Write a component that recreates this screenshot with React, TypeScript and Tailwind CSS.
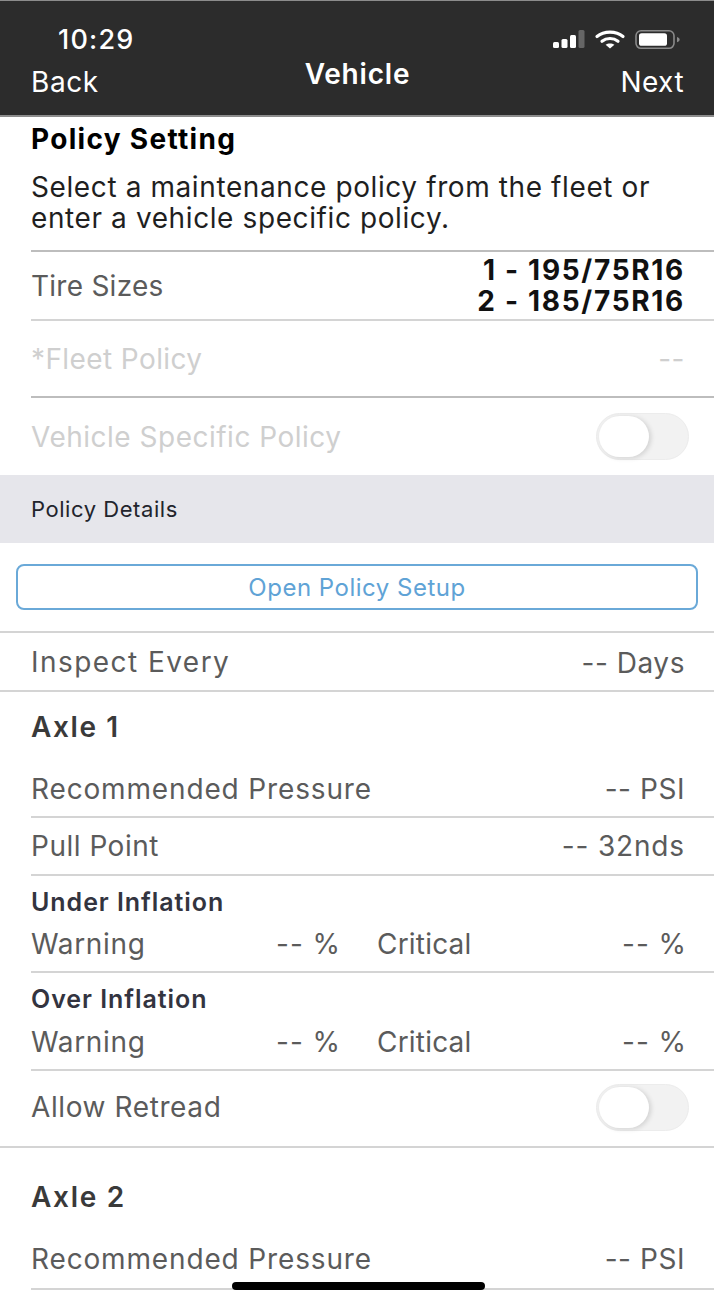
function Row({
  label,
  value,
  labelClass,
  valueClass,
  className = '',
}: {
  label: string
  value: string
  labelClass: string
  valueClass: string
  className?: string
}) {
  return (
    <div className={`flex items-center justify-between pr-[29px] pl-[31px] text-[28px] ${className}`}>
      <span className={labelClass}>{label}</span>
      <span className={valueClass}>{value}</span>
    </div>
  )
}

function Divider({ full = false, color = 'bg-[#d4d4d4]' }: { full?: boolean; color?: string }) {
  return <div className={`h-[2px] shrink-0 ${color} ${full ? '' : 'ml-[31px]'}`} />
}

function Toggle() {
  return (
    <div className="h-[47px] w-[93px] rounded-full border border-[#ececec] bg-[#f2f2f2] p-[2px]">
      <div className="h-[41px] w-[50px] rounded-full bg-white shadow-[2px_1px_5px_rgba(0,0,0,0.14)]" />
    </div>
  )
}

function Inflation({
  title,
  titleClass,
  gridClass,
  className,
}: {
  title: string
  titleClass: string
  gridClass: string
  className: string
}) {
  return (
    <div className={`flex flex-col pr-[29px] pl-[31px] ${className}`}>
      <div className={`mt-[11px] text-[25px] leading-[30px] font-semibold text-[#33343f] ${titleClass}`}>{title}</div>
      <div className={`grid grid-cols-[308px_1fr] gap-[38px] text-[28px] leading-[34px] text-[#5b5b5b] ${gridClass}`}>
        <div className="flex justify-between">
          <span className="tracking-[0.65px]">Warning</span>
          <span className="-mr-[2px] tracking-[0.95px]">-- %</span>
        </div>
        <div className="flex justify-between">
          <span className="tracking-[0.2px]">Critical</span>
          <span className="-mr-[2px] tracking-[0.95px]">-- %</span>
        </div>
      </div>
    </div>
  )
}

function StatusIcons() {
  return (
    <svg className="block" width="128" height="20" viewBox="0 0 128 20" fill="none">
      <rect x="0" y="12" width="6" height="6" rx="1.5" fill="#fff" />
      <rect x="8.5" y="9" width="6" height="9" rx="1.5" fill="#fff" />
      <rect x="17" y="5" width="6" height="13" rx="1.5" fill="#fff" />
      <rect x="25.5" y="0" width="6" height="18" rx="1.5" fill="#666" />
      <path d="M44 6.5C51 .6 63 .6 70 6.5" stroke="#fff" strokeWidth="3.2" strokeLinecap="round" />
      <path d="M49 11.2C53.6 7.6 60.4 7.6 65 11.2" stroke="#fff" strokeWidth="3.2" strokeLinecap="round" />
      <path d="M52.6 14.8 57 18.5l4.4-3.7c-2.5-1.9-6.3-1.9-8.8 0Z" fill="#fff" />
      <rect x="83" y="0.8" width="38" height="17.5" rx="5" stroke="#8a8a8a" strokeWidth="1.6" />
      <rect x="86" y="3.2" width="28" height="12.6" rx="2.6" fill="#fff" />
      <path d="M124 7c1.6.4 2.6 1.3 2.6 2.6s-1 2.2-2.6 2.6Z" fill="#8a8a8a" />
    </svg>
  )
}

export default function App() {
  return (
    <div className="relative h-[1302px] w-[714px] overflow-hidden bg-white font-['Inter','Liberation_Sans',sans-serif]">
      <header className="h-[117px] border-t border-b-2 border-t-[#8c8c8c] border-b-[#8c8c8c] bg-[#2c2c2c] text-white">
        <div className="flex h-[55px] items-end justify-between pr-[33px] pl-[58px]">
          <span className="-mb-[2px] text-[27px] leading-[36px] font-medium tracking-[1.2px]">10:29</span>
          <div className="mb-[6px]">
            <StatusIcons />
          </div>
        </div>
        <div className="grid grid-cols-3 px-[30px] text-[28px]">
          <span className="pt-[7px] pl-[1px] leading-[38px] tracking-[0.6px]">Back</span>
          <span className="-mt-[1px] pl-[1px] text-center leading-[38px] font-semibold tracking-[0.8px]">Vehicle</span>
          <span className="pt-[7px] text-right leading-[38px] tracking-[0.45px]">Next</span>
        </div>
      </header>

      <div className="flex h-[133px] flex-col pl-[31px]">
        <div className="mt-[5px] text-[28px] leading-[34px] font-bold tracking-[1.3px] text-black">Policy Setting</div>
        <p className="mt-[16px] text-[28px] leading-[31px] tracking-[0.6px] text-[#1f1f1f]">
          Select a maintenance policy from the fleet or
          <br />
          enter a vehicle specific policy.
        </p>
      </div>
      <Divider color="bg-[#bdbdbd]" />

      <div className="flex h-[67px] items-center justify-between pr-[29px] pl-[31px] text-[28px] text-[#5b5b5b]">
        <span className="tracking-[0.25px]">Tire Sizes</span>
        <span className="text-right text-[28px] leading-[31px] font-bold tracking-[1.7px] text-[#111]">
          1 - 195/75R16
          <br />
          2 - 185/75R16
        </span>
      </div>
      <Divider />

      <Row
        label="*Fleet Policy"
        value="--"
        labelClass="tracking-[0.4px]"
        valueClass="tracking-[0.5px]"
        className="h-[75px] text-[#cfcfcf]"
      />
      <Divider color="bg-[#bdbdbd]" />

      <div className="flex h-[77px] items-center justify-between pr-[25px] pl-[31px] text-[28px] text-[#cfcfcf]">
        <span className="tracking-[0.5px]">Vehicle Specific Policy</span>
        <Toggle />
      </div>

      <div className="flex h-[68px] items-center bg-[#e6e6eb] pl-[31px] text-[22px] tracking-[0.55px] text-[#22242c]">
        Policy Details
      </div>

      <div className="flex h-[88px] items-center px-[16px]">
        <button className="h-[46px] w-full rounded-[8px] border-2 border-[#6aa9d8] pt-[2px] text-[24px] tracking-[0.5px] text-[#5fa3d6]">
          Open Policy Setup
        </button>
      </div>
      <Divider full />

      <Row
        label="Inspect Every"
        value="-- Days"
        labelClass="tracking-[1.45px]"
        valueClass="pt-[3px] tracking-[0.55px]"
        className="h-[57px] text-[#5b5b5b]"
      />
      <Divider full />

      <div className="flex h-[70px] items-center pl-[31px] text-[28px] font-semibold tracking-[1.6px] text-[#3a3a3a]">
        Axle 1
      </div>
      <Row
        label="Recommended Pressure"
        value="-- PSI"
        labelClass="tracking-[0.85px]"
        valueClass="tracking-[0.55px]"
        className="h-[54px] text-[#5b5b5b]"
      />
      <Divider />
      <Row
        label="Pull Point"
        value="-- 32nds"
        labelClass="tracking-[0.5px]"
        valueClass="tracking-[0.85px]"
        className="h-[56px] text-[#5b5b5b]"
      />
      <Divider />
      <Inflation title="Under Inflation" titleClass="tracking-[0.95px]" gridClass="mt-[10px]" className="h-[95px]" />
      <Divider />
      <Inflation title="Over Inflation" titleClass="tracking-[0.95px]" gridClass="mt-[11px]" className="h-[96px]" />
      <Divider />
      <div className="flex h-[75px] items-center justify-between pr-[25px] pb-[2px] pl-[31px] text-[28px] text-[#5b5b5b]">
        <span className="pb-[2px] tracking-[0.6px]">Allow Retread</span>
        <Toggle />
      </div>
      <Divider full />

      <div className="flex h-[94px] items-center pt-[4px] pl-[31px] text-[28px] font-semibold tracking-[1.7px] text-[#3a3a3a]">
        Axle 2
      </div>
      <Row
        label="Recommended Pressure"
        value="-- PSI"
        labelClass="tracking-[0.85px]"
        valueClass="tracking-[0.55px]"
        className="h-[46px] pb-[12px] text-[#5b5b5b]"
      />
      <Divider />

      {/* home indicator sits over the list */}
      <div className="absolute top-[1282px] left-[232px] h-[8px] w-[253px] rounded-full bg-black" />
    </div>
  )
}
